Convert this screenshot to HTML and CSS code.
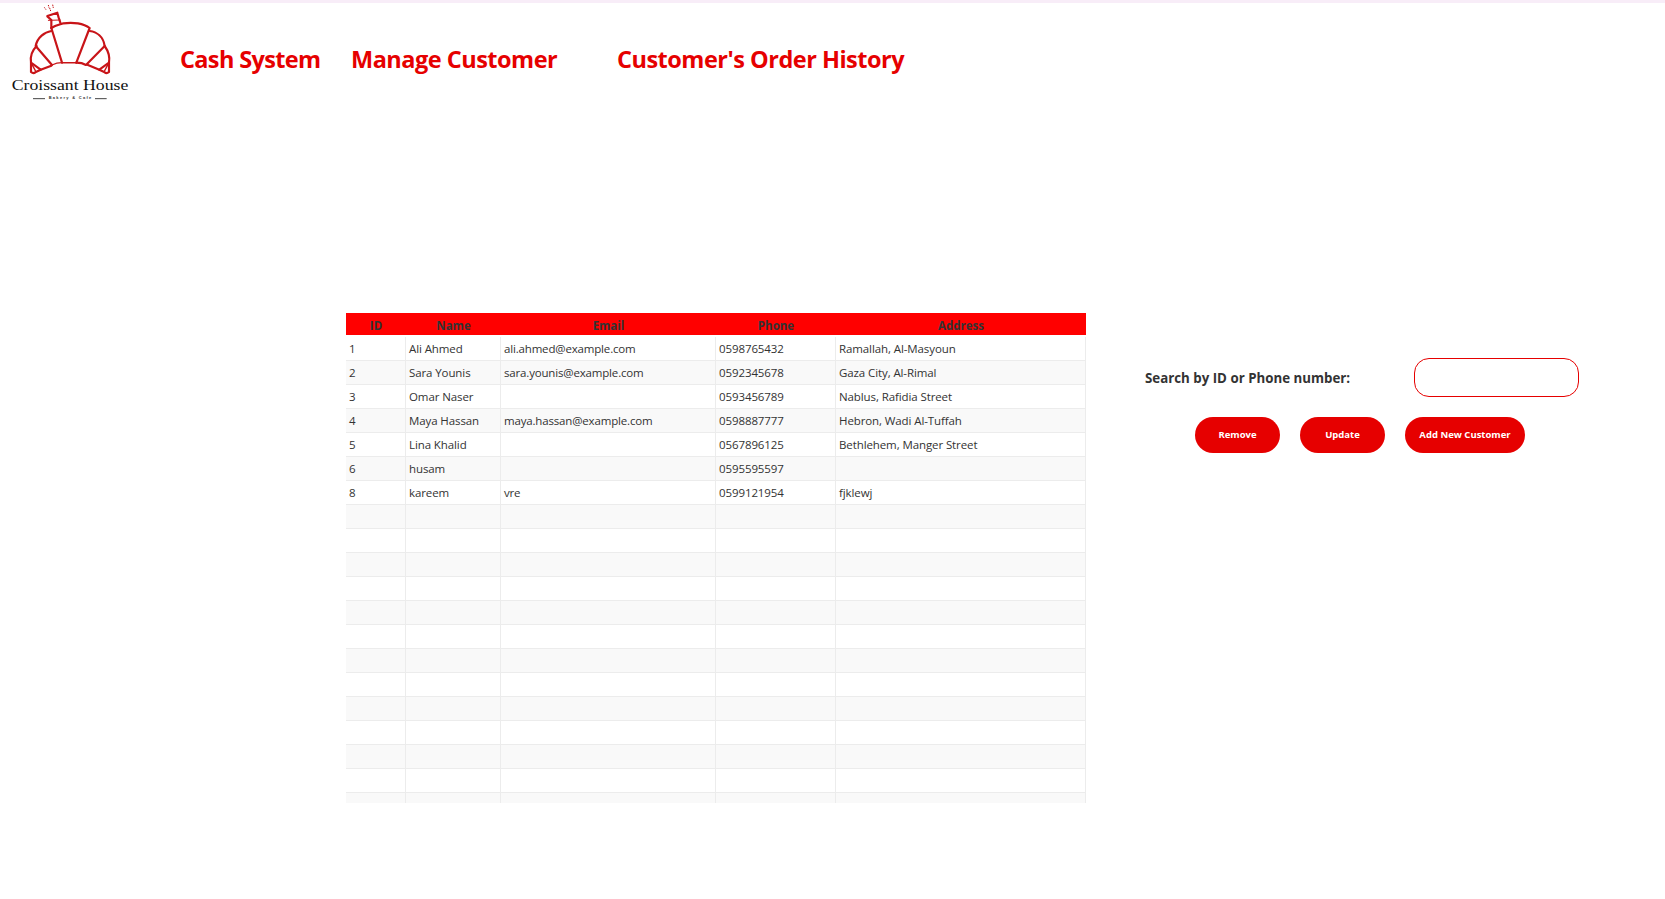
FILE: index.html
```html
<!DOCTYPE html>
<html lang="en">
<head>
<meta charset="utf-8">
<title>Croissant House</title>
<link rel="stylesheet" href="styles.css">
</head>
<body>
<header class="header">
  <svg class="logo" viewBox="0 0 420 330" role="img" aria-label="Croissant House">
    <g fill="none" stroke="#c81418" stroke-width="6.5" stroke-linejoin="round" stroke-linecap="round">
      <path d="M154 84C166 76 178 74 190 70Q212 67 234 70Q256 74 269 84L229 188"/>
      <path d="M154 84L186 188"/>
      <path d="M186 188H229" stroke-width="4.5"/>
      <path d="M154 93C134 96 112 112 107 138L156 195"/>
      <path d="M156 195Q170 188 186 188" stroke-width="3.5"/>
      <path d="M269 93C290 96 310 110 314 138L258 195Q246 188 229 188"/>
      <path d="M110 138C96 152 90 170 93 188L122 209L154 197"/>
      <path d="M314 106C324 130 330 166 327 188L298 209L262 194" stroke="none"/>
      <path d="M314 138C324 152 330 170 327 188L298 209L262 194"/>
      <path d="M93 188V216Q100 222 106 217L122 209"/>
      <path d="M93 188L106 212M327 188L314 212" stroke-width="4"/>
      <path d="M327 188V216Q320 222 314 217L298 209"/>
      <path d="M142 48L172 38M142 49L154 60V84M172 39L176 53L182 71"/>
      <path d="M145 61L180 60" stroke-width="3"/>
    </g>
    <path d="M133 22l5 7M145 15l2 8M149 24l3 9M158 14l2 10" fill="none" stroke="#c81418" stroke-width="3" stroke-dasharray="4 2"/>
    <text class="logo-name" x="35" y="271" textLength="350" lengthAdjust="spacingAndGlyphs">Croissant House</text>
    <text class="logo-tag" x="146" y="297" textLength="128">Bakery &amp; Cafe</text>
    <path d="M99 296H135M285 296H320" stroke="#444" stroke-width="3"/>
  </svg>
  <nav class="nav">
    <a class="nav-cash">Cash System</a>
    <a class="nav-manage">Manage Customer</a>
    <a class="nav-history">Customer's Order History</a>
  </nav>
</header>
<main class="content">
  <section class="table">
    <div class="table-head"><span>ID</span><span>Name</span><span>Email</span><span>Phone</span><span>Address</span></div>
    <div class="table-body">
      <div class="row"><span>1</span><span>Ali Ahmed</span><span>ali.ahmed@example.com</span><span>0598765432</span><span>Ramallah, Al-Masyoun</span></div>
      <div class="row"><span>2</span><span>Sara Younis</span><span>sara.younis@example.com</span><span>0592345678</span><span>Gaza City, Al-Rimal</span></div>
      <div class="row"><span>3</span><span>Omar Naser</span><span></span><span>0593456789</span><span>Nablus, Rafidia Street</span></div>
      <div class="row"><span>4</span><span>Maya Hassan</span><span>maya.hassan@example.com</span><span>0598887777</span><span>Hebron, Wadi Al-Tuffah</span></div>
      <div class="row"><span>5</span><span>Lina Khalid</span><span></span><span>0567896125</span><span>Bethlehem, Manger Street</span></div>
      <div class="row"><span>6</span><span>husam</span><span></span><span>0595595597</span><span></span></div>
      <div class="row"><span>8</span><span>kareem</span><span>vre</span><span>0599121954</span><span>fjklewj</span></div>
      <div class="row"><span></span><span></span><span></span><span></span><span></span></div>
      <div class="row"><span></span><span></span><span></span><span></span><span></span></div>
      <div class="row"><span></span><span></span><span></span><span></span><span></span></div>
      <div class="row"><span></span><span></span><span></span><span></span><span></span></div>
      <div class="row"><span></span><span></span><span></span><span></span><span></span></div>
      <div class="row"><span></span><span></span><span></span><span></span><span></span></div>
      <div class="row"><span></span><span></span><span></span><span></span><span></span></div>
      <div class="row"><span></span><span></span><span></span><span></span><span></span></div>
      <div class="row"><span></span><span></span><span></span><span></span><span></span></div>
      <div class="row"><span></span><span></span><span></span><span></span><span></span></div>
      <div class="row"><span></span><span></span><span></span><span></span><span></span></div>
      <div class="row"><span></span><span></span><span></span><span></span><span></span></div>
      <div class="row"><span></span><span></span><span></span><span></span><span></span></div>
    </div>
  </section>
  <section class="panel">
    <div class="search">
      <label class="search-label" for="query">Search by ID or Phone number:</label>
      <input class="search-input" id="query" type="text">
    </div>
    <div class="actions">
      <button class="button">Remove</button>
      <button class="button">Update</button>
      <button class="button button-wide">Add New Customer</button>
    </div>
  </section>
</main>
</body>
</html>
```
FILE: styles.css
```css
* { box-sizing: border-box; }
body {
  margin: 0;
  height: 899px;
  overflow: hidden;
  background: #fff;
  color: #333;
  font-family: "Open Sans", "Noto Sans", sans-serif;
}
.header {
  display: flex;
  height: 110px;
  border-top: 3px solid #f8edf8;
}
.logo { width: 140px; height: 110px; margin-top: -3px; flex: none; }
.logo-name { font: 45px "Liberation Serif", serif; fill: #111; }
.logo-tag { font: bold 12px "Liberation Sans", sans-serif; fill: #333; }
.nav {
  display: flex;
  padding: 40px 0 0 40px;
  color: #e60000;
  font-size: 23.5px;
  font-weight: 700;
  line-height: 32px;
  letter-spacing: -0.5px;
  white-space: nowrap;
}
.nav-cash { width: 171px; letter-spacing: -0.65px; }
.nav-manage { width: 266px; }
.content { display: flex; align-items: flex-start; padding: 203px 0 0 346px; }
.table { width: 740px; height: 490px; overflow: hidden; }
.table-head, .row { display: grid; grid-template-columns: 60px 95px 215px 120px 250px; }
.table-head {
  height: 22px;
  margin-bottom: 2px;
  background: #f00;
  font-size: 11.5px;
  font-weight: 700;
  line-height: 26px;
  text-align: center;
}
.table-body { height: 466px; overflow: hidden; }
.row { height: 24px; font-size: 11.5px; line-height: 24px; letter-spacing: -0.1px; white-space: nowrap; }
.row:nth-child(even) { background: #f9f9f9; }
.row span { height: 24px; padding-left: 3px; border-right: 1px solid #ececec; border-bottom: 1px solid #ececec; }
.row span:nth-child(3) { letter-spacing: -0.17px; }
.panel { padding: 45px 0 0 59px; }
.search { display: flex; align-items: center; }
.search-label { width: 269px; font-size: 13.3px; font-weight: 700; white-space: nowrap; }
.search-input {
  width: 165px;
  height: 39px;
  border: 1px solid #e60000;
  border-radius: 15px;
  background: #fff;
  outline: none;
}
.actions { display: flex; gap: 20px; padding: 20px 0 0 50px; }
.button {
  width: 85px;
  height: 36px;
  padding: 0 0 2px;
  border: 0;
  border-radius: 18px;
  background: #e60000;
  color: #fff;
  font: 700 9.5px "Open Sans", sans-serif;
  white-space: nowrap;
}
.button-wide { width: 120px; }
```
